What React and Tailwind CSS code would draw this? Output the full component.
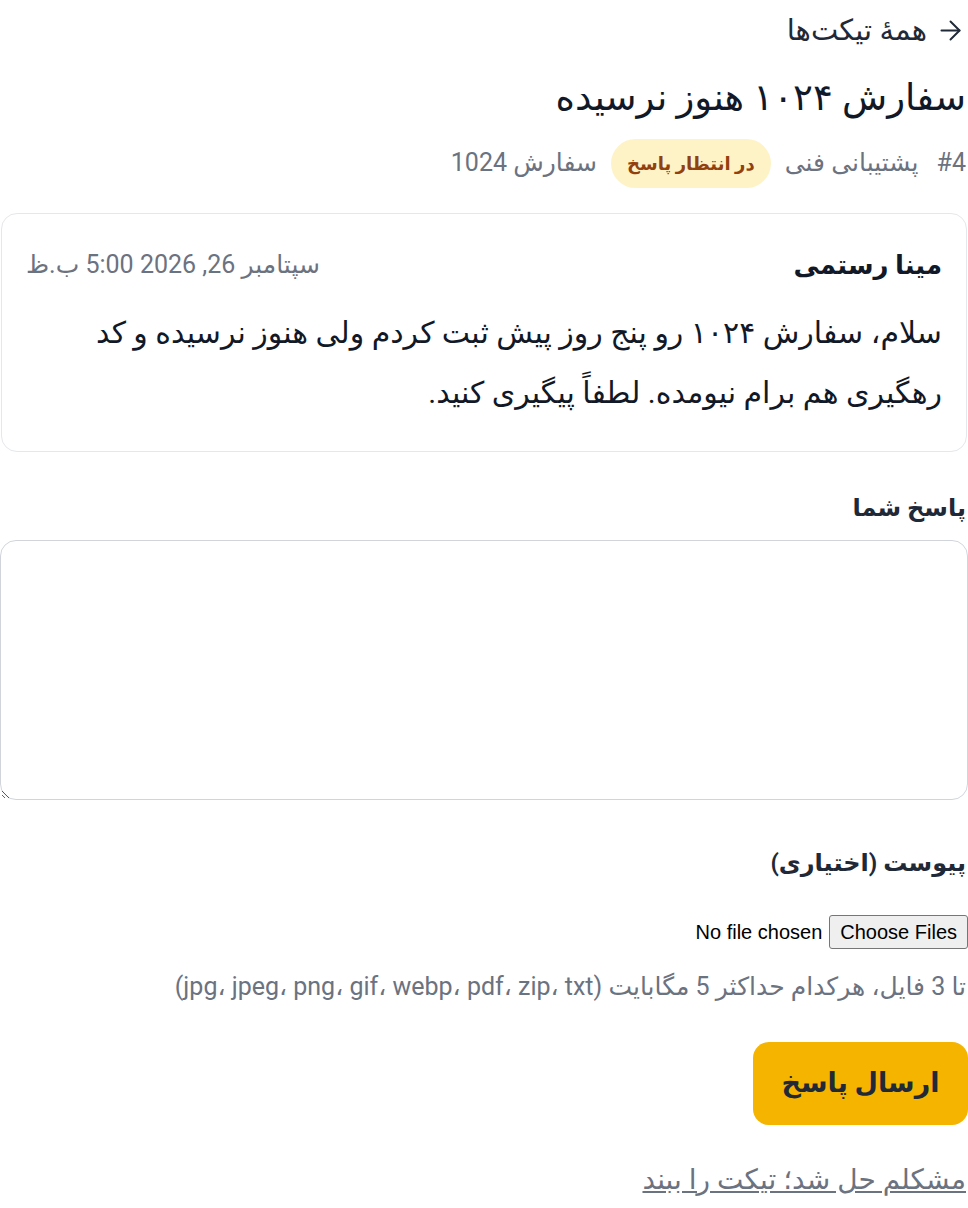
import { ArrowRight } from 'lucide-react'

export default function App() {
  return (
    <div dir="rtl" className="min-h-screen bg-white text-[#111827]" style={{ fontFamily: 'Roboto, "DejaVu Sans", sans-serif' }}>
      <div className="pr-[2px]">
        <a href="#" className="mt-[12px] inline-flex items-center gap-[8px] text-[29px] leading-[36px] text-[#1f2937]">
          <ArrowRight size={31} strokeWidth={1.5} />
          <span>همهٔ تیکت‌ها</span>
        </a>
        <h1 className="mt-[21px] text-[37px] leading-[48px]">سفارش ۱۰۲۴ هنوز نرسیده</h1>
        <div className="mt-[17px] flex items-center gap-[14px] text-[25px] text-[#6b7280]">
          <span className="pl-[4px]">#4</span>
          <span>پشتیبانی فنی</span>
          <span className="rounded-full bg-[#fef3c7] px-4 text-[18px] font-bold leading-[49px] text-[#92400e]">در انتظار پاسخ</span>
          <span>سفارش 1024</span>
        </div>
      </div>

      <div className="mt-[25px] ml-[1px] mr-[1px] rounded-2xl border border-[#e5e7eb] px-6 pt-[33px] pb-[28px]">
        <div className="flex items-center justify-between">
          <span className="text-[26px] font-bold leading-[36px] text-[#111827]">مینا رستمی</span>
          <span className="text-[25px] leading-[36px] text-[#6b7280]">سپتامبر 26, 2026 5:00 ب.ظ</span>
        </div>
        <p className="mt-5 max-w-[885px] text-[30px] leading-[60px] text-[#111827]">
          سلام، سفارش ۱۰۲۴ رو پنج روز پیش ثبت کردم ولی هنوز نرسیده و کد رهگیری هم برام نیومده. لطفاً پیگیری کنید.
        </p>
      </div>

      <form className="mt-[38px]">
        <label className="block pr-[2px] text-[24px] font-bold leading-[36px] text-[#1f2937]">پاسخ شما</label>
        <textarea rows={6} className="mt-[14px] block h-[260px] w-full rounded-2xl border border-[#d1d5db] p-4 text-[20px]"></textarea>

        <label className="mt-[45px] block pr-[2px] text-[24px] font-bold leading-[36px] text-[#1f2937]">پیوست (اختیاری)</label>
        <input
          type="file"
          multiple
          className="mt-[34px] block text-[20px] text-black file:me-[7px] file:rounded-[3px] file:border file:border-[#767676] file:bg-[#efefef] file:px-[10px] file:py-[1px] file:text-black"
          style={{ fontFamily: '"Liberation Sans", Arial, sans-serif' }}
        />
        <p className="mt-[22px] pr-[2px] text-[25px] leading-[32px] text-[#6b7280]">تا 3 فایل، هرکدام حداکثر 5 مگابایت (jpg، jpeg، png، gif، webp، pdf، zip، txt)</p>

        <button type="button" className="mt-[39px] h-[83px] w-[215px] rounded-2xl bg-[#f4b400] text-[27px] font-bold text-[#1f2937]">ارسال پاسخ</button>
      </form>

      <a href="#" className="mt-[37px] mr-[2px] inline-block text-[28px] leading-[36px] text-[#6b7280] underline">مشکلم حل شد؛ تیکت را ببند</a>
    </div>
  );
}
